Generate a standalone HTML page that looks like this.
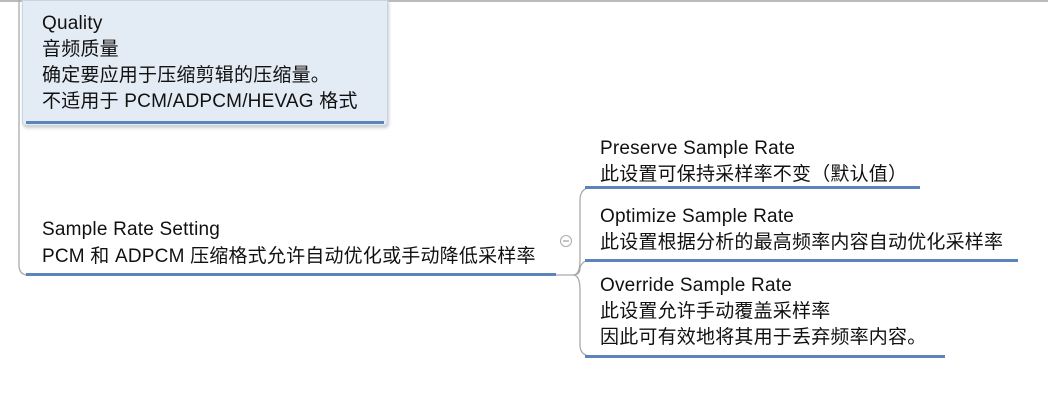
<!DOCTYPE html>
<html><head><meta charset="utf-8"><style>
body{margin:0;width:1048px;height:401px;background:#fff;position:relative;overflow:hidden;font-family:"Liberation Sans","Noto Sans CJK SC",sans-serif;font-size:19px;color:#111}
.t{position:absolute;line-height:26px;white-space:nowrap;letter-spacing:0.2px}
.u{position:absolute;height:3px;background:#5b84b8}
</style></head><body>
<div style="position:absolute;left:0;top:0;width:1048px;height:2px;background:#bbb"></div>
<div style="position:absolute;left:22px;top:0;width:364px;height:124px;background:#e3ecf5;border:1px solid #c8d4e0;border-radius:0 0 4px 4px;box-shadow:1px 2px 3px #ccc"></div>
<div class="u" style="left:26px;top:121px;width:358px"></div>
<div class="t" style="left:42px;top:11px">Quality<br>音频质量<br>确定要应用于压缩剪辑的压缩量。<br>不适用于 PCM/ADPCM/HEVAG 格式</div>
<svg style="position:absolute;left:0;top:0" width="1048" height="401">
<path d="M19 0 V265 Q19 275 28 275" stroke="#aaa" fill="none" stroke-width="1.3"/>
<path d="M555 275 H573 M573 275 Q580 275 580 260 V200 Q580 188 592 187 M573 275 Q580 275 580 268 Q582 260 592 260 M573 275 Q580 275 580 290 V345 Q580 356 592 356" stroke="#aaa" fill="none" stroke-width="1.3"/>
<circle cx="566" cy="241" r="5.5" fill="#fff" stroke="#aaa"/>
<line x1="563" y1="241" x2="569" y2="241" stroke="#888"/>
</svg>
<div class="t" style="left:42px;top:216px;line-height:27px">Sample Rate Setting<br>PCM 和 ADPCM 压缩格式允许自动优化或手动降低采样率</div>
<div class="u" style="left:26px;top:273px;width:530px"></div>
<div class="t" style="left:600px;top:136px">Preserve Sample Rate<br>此设置可保持采样率不变（默认值）</div>
<div class="u" style="left:585px;top:186px;width:335px"></div>
<div class="t" style="left:600px;top:204px">Optimize Sample Rate<br>此设置根据分析的最高频率内容自动优化采样率</div>
<div class="u" style="left:585px;top:259px;width:433px"></div>
<div class="t" style="left:600px;top:273px">Override Sample Rate<br>此设置允许手动覆盖采样率<br>因此可有效地将其用于丢弃频率内容。</div>
<div class="u" style="left:585px;top:355px;width:360px"></div>
</body></html>
